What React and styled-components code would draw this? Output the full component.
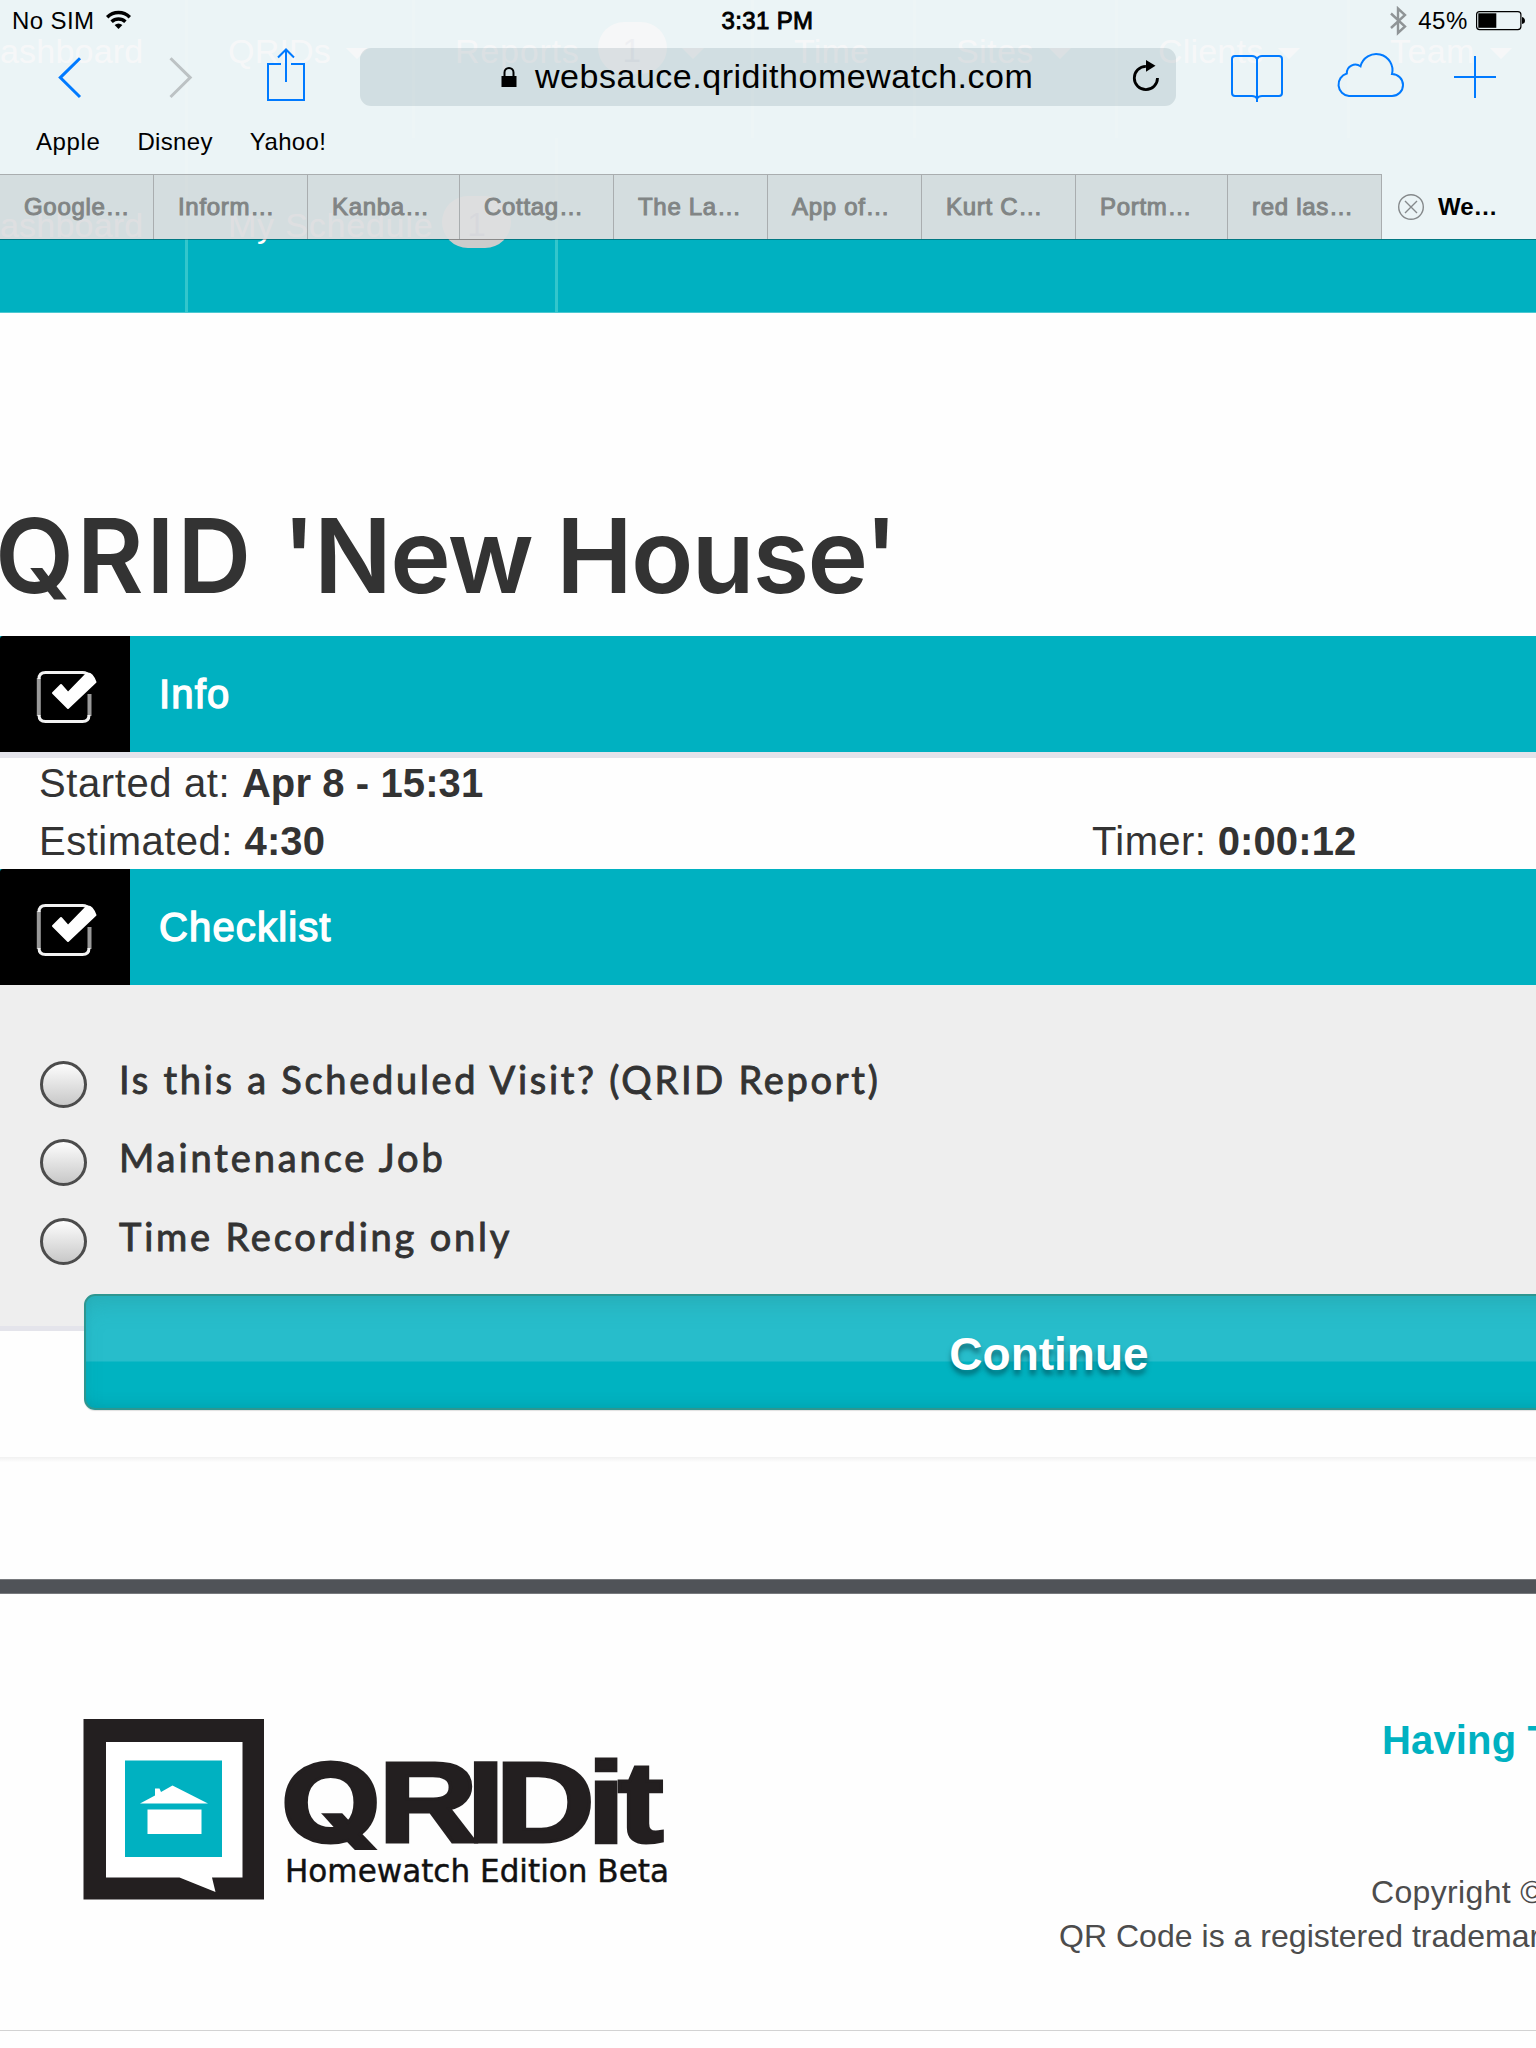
import React from "react";
import styled, { createGlobalStyle } from "styled-components";

const TEAL = "#00b1c1";
const BLUE = "#007aff";
const SANS = '"Liberation Sans", Arial, sans-serif';

const Global = createGlobalStyle`
  *, *::before, *::after { box-sizing: border-box; }
  html, body { margin: 0; padding: 0; background: #fff; }
  body { font-family: ${SANS}; color: #333; }
  svg { display: block; flex: none; }
`;

const Screen = styled.div`
  position: relative;
  width: 1536px;
  height: 2048px;
  overflow: hidden;
  background: #fefefe;
  display: flow-root;
  white-space: nowrap;
`;

/* ---------- browser chrome ---------- */

const Chrome = styled.header`
  position: absolute;
  top: 0;
  left: 0;
  width: 100%;
  color: #000;
  background: rgba(246, 247, 248, 0.957);
  background-clip: padding-box;
  border-bottom: 1px solid rgba(0, 0, 0, 0.32);
`;

const StatusBar = styled.div`
  display: grid;
  grid-template-columns: 1fr auto 1fr;
  align-items: center;
  height: 41px;
  padding: 0 10px 0 12px;
  font-size: 24px;
  line-height: 41px;
`;

const StatusGroup = styled.div`
  display: flex;
  align-items: center;
  justify-content: ${(p) => (p.$end ? "flex-end" : "flex-start")};
  letter-spacing: ${(p) => p.$track || 0}px;
`;

const Clock = styled.div`
  margin-right: 3px;
  letter-spacing: 0.35px;
  -webkit-text-stroke: 0.9px currentColor;
`;

const Toolbar = styled.div`
  display: flex;
  align-items: center;
  height: 72px;
`;

const ToolButton = styled.span`
  display: block;
  flex: none;
  width: ${(p) => p.$w}px;
  margin-left: ${(p) => p.$ml}px;
`;

const AddressField = styled.div`
  display: flex;
  align-items: center;
  width: 816px;
  height: 58px;
  margin-left: 48px;
  padding: 0 17px 0 141px;
  border-radius: 11px;
  background: rgba(0, 48, 66, 0.11);
`;

const Address = styled.span`
  flex: 1;
  margin-left: 18px;
  padding-bottom: 1px;
  font-size: 34px;
  line-height: 57px;
  letter-spacing: 0.52px;
`;

const Bookmarks = styled.div`
  display: flex;
  gap: 37px;
  height: 61px;
  padding-left: 36px;
  font-size: 24px;
  line-height: 57px;
`;

const Bookmark = styled.span`
  letter-spacing: ${(p) => p.$track}px;
`;

const TabRow = styled.div`
  display: flex;
  height: 65px;
`;

const Tab = styled.div`
  width: ${(p) => p.$w}px;
  flex: none;
  border-top: 1px solid #a9adaf;
  border-right: 1px solid #a9adaf;
  background: rgba(0, 0, 6, 0.095);
  padding-left: 24px;
  color: #818585;
  font-size: 24px;
  -webkit-text-stroke: 1px currentColor;
  line-height: 64px;
  letter-spacing: 0.7px;
`;

const ActiveTab = styled.div`
  display: flex;
  align-items: center;
  gap: 13px;
  padding: 1px 0 0 15px;
  font-size: 24px;
  font-weight: 700;
  line-height: 64px;
`;

/* ---------- site navigation ---------- */

const SiteNav = styled.nav`
  margin-top: -36px;
  background: ${TEAL};
  border-bottom: 1px solid #4cc8d1;
`;

const NavRow = styled.div`
  display: flex;
`;

const NavItem = styled.div`
  display: flex;
  align-items: flex-start;
  flex: none;
  width: ${(p) => p.$w}px;
  height: 174px;
  padding-top: 58px;
  padding-left: ${(p) => (p.$first ? 0 : 40)}px;
  border-right: 3px solid #33c6cc;
  color: #fff;
  font-size: 34px;
  line-height: 58px;
  letter-spacing: ${(p) => p.$track || 0.2}px;
`;

const Caret = styled.i`
  margin: 26px 0 0 15px;
  border: 11px solid transparent;
  border-top-color: #fff;
  border-bottom-width: 0;
`;

const Count = styled.span`
  width: 69px;
  height: 52px;
  margin-left: ${(p) => p.$ml}px;
  border-radius: 26px;
  background: ${(p) => p.$bg};
  color: #557;
  line-height: 56px;
  text-align: center;
`;

/* ---------- page ---------- */

const Title = styled.h1`
  margin: 183px 0 20px -5px;
  font-family: Inter, ${SANS};
  font-size: 102.5px;
  line-height: 120px;
  font-weight: 600;
  letter-spacing: 2.6px;
  color: #333;
`;

const TitleName = styled.span`
  letter-spacing: -1.65px;
`;

const SectionHeader = styled.div`
  display: flex;
  align-items: center;
  height: 116px;
  padding-top: 1px;
  background: ${TEAL};
  color: #fff;
  font-size: 40px;
  line-height: 115px;
  letter-spacing: 1.15px;
  -webkit-text-stroke: 1.4px currentColor;
`;

const SectionIcon = styled.div`
  width: 130px;
  height: 116px;
  margin: -1px 29px 0 0;
  background: #000;
  border-top-left-radius: 3px;
`;

const Details = styled.div`
  display: grid;
  grid-template-columns: 1053px 1fr;
  row-gap: 10px;
  height: 117px;
  padding: 1px 0 4px 39px;
  border-top: 6px solid #e3e3ea;
  font-size: 40px;
  line-height: 48px;
`;

const Detail = styled.div`
  letter-spacing: ${(p) => p.$track}px;
  ${(p) => p.$wide && "grid-column: 1 / -1;"}
  b { letter-spacing: 0.1px; }
`;

const Checklist = styled.div`
  height: 346px;
  padding-top: 60px;
  background: #eee;
  border-bottom: 5px solid #e4e4eb;
`;

const Option = styled.label`
  display: flex;
  align-items: center;
  gap: 32.5px;
  height: 78.5px;
  padding-left: 39.5px;
`;

const Radio = styled.span`
  width: 47px;
  height: 47px;
  border: 3px solid #4c4c4c;
  border-radius: 50%;
  background: linear-gradient(#fdfdfd, #c8c8c8);
`;

const OptionText = styled.span`
  padding-bottom: 11px;
  font-family: Lato, "Open Sans", sans-serif;
  font-size: 38px;
  -webkit-text-stroke: 0.9px currentColor;
  letter-spacing: ${(p) => p.$track}px;
`;

const ContinueButton = styled.div`
  width: 1931px;
  height: 116px;
  margin: 13.5px 0 0 83.5px;
  border: 2px solid #2e9690;
  border-radius: 11px;
  background: linear-gradient(#27bdcb 0 65px, #00b3c1 66px);
  box-shadow: inset 0 16px 24px -10px rgba(40, 140, 140, 0.35),
    inset 0 -10px 14px -8px rgba(0, 120, 130, 0.3), 0 1px 1px rgba(0, 0, 0, 0.12);
  color: #fff;
  font-size: 46px;
  font-weight: 700;
  line-height: 116px;
  text-align: center;
  text-shadow: 0 5px 5px rgba(0, 60, 70, 0.55);
`;

const Divider = styled.div`
  height: 5px;
  margin-top: 126px;
  background: linear-gradient(#f1f1f1, #fdfdfd);
`;

const FooterBar = styled.div`
  height: 15px;
  margin-top: 117px;
  background: #505358;
  border: solid #77797d;
  border-width: 1px 0;
`;

const Footer = styled.footer`
  display: flex;
  height: 437px;
  padding: 125px 0 0 83px;
  border-bottom: 1px solid #d2d2d2;
`;

const Legal = styled.div`
  margin-left: 386px;
  color: #4c4c4c;
  font-size: 32px;
  line-height: 44px;
`;

const HelpLink = styled.div`
  margin: -3px 0 106px 323px;
  color: ${TEAL};
  font-size: 40px;
  font-weight: 700;
  line-height: 48px;
  letter-spacing: 0.15px;
`;

const LegalLine = styled.div`
  padding-left: ${(p) => p.$indent}px;
  letter-spacing: ${(p) => p.$track}px;
`;

/* ---------- drawings ---------- */

const WifiIcon = () => (
  <svg width="28" height="22" viewBox="105 10 28 22" fill="none" stroke="#000" strokeWidth="3.4" style={{ marginLeft: 11 }}>
    <path d="M107.2 17.2a16 16 0 0 1 22.6 0" />
    <path d="M111.6 21.8a9.8 9.8 0 0 1 13.8 0" />
    <path d="M114.6 25q3.9-3.2 7.8 0l-3.9 4z" fill="#000" stroke="none" />
  </svg>
);

const BluetoothIcon = () => (
  <svg width="18" height="30" viewBox="1389 6 18 30" fill="none" stroke="#8f9496" strokeWidth="2.400" style={{ marginRight: 11 }}>
    <path d="M1391 13.5l14 13-7 6.500V8.500l7 6.500-14 13" />
  </svg>
);

const BatteryIcon = () => (
  <svg width="50" height="22" viewBox="1476 10 50 22" style={{ marginLeft: 8 }}>
    <rect x="1476.600" y="11.600" width="44.300" height="18" rx="3" fill="none" stroke="#000" strokeWidth="1.200" />
    <rect x="1478.300" y="13.300" width="18" height="14.500" fill="#000" />
    <path d="M1522 17q3 1 3 3.700t-3 3.300z" fill="#000" />
  </svg>
);

const BackIcon = () => (
  <svg width="36" height="72" viewBox="52 41 36 72" fill="none" stroke={BLUE} strokeWidth="3">
    <path d="M80 58.300L60.300 77.600 80 97" />
  </svg>
);

const ForwardIcon = () => (
  <svg width="36" height="72" viewBox="162 41 36 72" fill="none" stroke="#bcc2c4" strokeWidth="3">
    <path d="M170.500 58.300L190.200 77.600 170.500 97" />
  </svg>
);

const ShareIcon = () => (
  <svg width="52" height="72" viewBox="260 41 52 72" fill="none" stroke={BLUE} strokeWidth="2">
    <path d="M281 64h-13v36h36V64h-13M286 82V49.500M278 57.500l8-8 8 8" />
  </svg>
);

const LockIcon = () => (
  <svg width="16" height="24" viewBox="500.500 66 16 24">
    <rect x="501" y="77" width="15" height="11" fill="#000" />
    <path d="M504 78v-4.500a4.500 4.500 0 0 1 9 0V78" fill="none" stroke="#000" strokeWidth="2" />
  </svg>
);

const ReloadIcon = () => (
  <svg width="28" height="36" viewBox="1131 60 28 36">
    <path d="M1157.500 79a11.600 11.600 0 1 1-11.600-11.600" fill="none" stroke="#000" strokeWidth="2.800" />
    <path d="M1146 61l9.500 5.800-9.500 6z" fill="#000" />
  </svg>
);

const BookIcon = () => (
  <svg width="60" height="72" viewBox="1228 41 60 72" fill="none" stroke={BLUE} strokeWidth="2">
    <path d="M1257 59q-1.500-3-5-3h-17a3 3 0 0 0-3 3v34a3 3 0 0 0 3 3h17q3.500 0 5 2.500 1.500-2.500 5-2.500h17a3 3 0 0 0 3-3V59a3 3 0 0 0-3-3h-17q-3.500 0-5 3zV102" />
  </svg>
);

const CloudIcon = () => (
  <svg width="74" height="72" viewBox="1334 41 74 72" fill="none" stroke={BLUE} strokeWidth="2">
    <path d="M1349 96h43a11 11 0 0 0 0-22 16 16 0 0 0-31.500-7.700 8.600 8.600 0 0 0-13.700 7.200A11.500 11.500 0 0 0 1349 96z" />
  </svg>
);

const PlusIcon = () => (
  <svg width="50" height="72" viewBox="1450 41 50 72" fill="none" stroke={BLUE} strokeWidth="2">
    <path d="M1475 56v42M1454 77h42" />
  </svg>
);

const CloseIcon = () => (
  <svg width="28" height="28" viewBox="-14 -14 28 28" fill="none" stroke="#85898b" strokeWidth="1.400">
    <circle r="12.300" />
    <path d="M-6-6L6 6M6-6L-6 6" />
  </svg>
);

const CheckedIcon = () => (
  <svg width="130" height="116" viewBox="0 636 130 116">
    <path d="M38.800 678v38M89.500 694v22" fill="none" stroke="#999" strokeWidth="4" />
    <path d="M39 679q0-6.500 6.500-6.500h37q5 0 6.500 4M39 715q0 6.500 6.500 6.500h37q6.500 0 6.500-6.500" fill="none" stroke="#f2f2f2" strokeWidth="3" />
    <path d="M53 693l8-8 7 8 19-19.500q5-1 8.500 8.500l-27.500 26z" fill="#fff" stroke="#fff" strokeWidth="2" strokeLinejoin="round" />
  </svg>
);

const Logo = () => (
  <svg width="590" height="190" viewBox="83 1719 590 190">
    <path fill="#231f20" d="M83.500 1719H264v180.500H83.500z" />
    <path fill="#fff" d="M106 1742h136.500v135.500H212l3.500 14.500-36-14.500H106z" />
    <path fill={TEAL} d="M125 1760.500h97v96.500h-97z" />
    <path fill="#fff" d="M140 1803.500l15-8v-7h4.500l1.500 3.500 11.500-6.500 35.500 18zM147.500 1809.500h54v24.500h-54z" />
    <g transform="scale(1.2 1)" fill="#231f20" stroke="#231f20" strokeWidth="3" fontFamily={SANS} fontWeight="700" fontSize="115">
      <text y="1842" x="233.500 315.300 388.700 412.800 489.200 514.800">
        <tspan fontFamily="Inter, sans-serif" fontSize="109">Q</tspan>RIDit
      </text>
    </g>
    <text x="285" y="1882" fontFamily='"DejaVu Sans Condensed", "DejaVu Sans", sans-serif' fontSize="31.500" fill="#111" stroke="#111" strokeWidth="0.400" textLength="384" lengthAdjust="spacingAndGlyphs">
      Homewatch Edition Beta
    </text>
  </svg>
);

/* ---------- data ---------- */

const TABS = [
  ["Google…", 154], ["Inform…", 154], ["Kanba…", 152], ["Cottag…", 154], ["The La…", 154],
  ["App of…", 154], ["Kurt C…", 154], ["Portm…", 152], ["red las…", 154],
];

const OPTIONS = [
  ["Is this a Scheduled Visit? (QRID Report)", 2.72],
  ["Maintenance Job", 2.9],
  ["Time Recording only", 2.8],
];

function BrowserChrome() {
  return (
    <Chrome>
      <StatusBar>
        <StatusGroup $track={0.4}>No SIM<WifiIcon /></StatusGroup>
        <Clock>3:31 PM</Clock>
        <StatusGroup $end $track={0.6}><BluetoothIcon />45%<BatteryIcon /></StatusGroup>
      </StatusBar>
      <Toolbar>
        <ToolButton $w={36} $ml={52}><BackIcon /></ToolButton>
        <ToolButton $w={36} $ml={74}><ForwardIcon /></ToolButton>
        <ToolButton $w={52} $ml={62}><ShareIcon /></ToolButton>
        <AddressField>
          <LockIcon />
          <Address>websauce.qridithomewatch.com</Address>
          <ReloadIcon />
        </AddressField>
        <ToolButton $w={60} $ml={52}><BookIcon /></ToolButton>
        <ToolButton $w={74} $ml={46}><CloudIcon /></ToolButton>
        <ToolButton $w={50} $ml={42}><PlusIcon /></ToolButton>
      </Toolbar>
      <Bookmarks>
        <Bookmark $track={0.6}>Apple</Bookmark>
        <Bookmark $track={0.35}>Disney</Bookmark>
        <Bookmark $track={0.35}>Yahoo!</Bookmark>
      </Bookmarks>
      <TabRow>
        {TABS.map(([label, w]) => <Tab key={label} $w={w}>{label}</Tab>)}
        <ActiveTab><CloseIcon />We…</ActiveTab>
      </TabRow>
    </Chrome>
  );
}

function Navigation() {
  return (
    <SiteNav>
      <NavRow>
        <NavItem $w={188} $first>ashboard</NavItem>
        <NavItem $w={227}>QRIDs<Caret /></NavItem>
        <NavItem $w={339} $track={0.8}>Reports<Count $ml={18} $bg="#eee">1</Count><Caret /></NavItem>
        <NavItem $w={162}>Time</NavItem>
        <NavItem $w={202} $track={0.4}>Sites<Caret /></NavItem>
        <NavItem $w={232}>Clients<Caret /></NavItem>
        <NavItem $w={189} $track={0.4}>Team<Caret /></NavItem>
      </NavRow>
      <NavRow>
        <NavItem $w={188} $first>ashboard</NavItem>
        <NavItem $w={370} $track={0.8}>My Schedule<Count $ml={9} $bg="#ccc">1</Count></NavItem>
      </NavRow>
    </SiteNav>
  );
}

export default function App() {
  return (
    <Screen>
      <Global />
      <Navigation />
      <Title>QRID <TitleName>'New House'</TitleName></Title>
      <SectionHeader><SectionIcon><CheckedIcon /></SectionIcon>Info</SectionHeader>
      <Details>
        <Detail $wide $track={0.6}>Started at: <b>Apr 8 - 15:31</b></Detail>
        <Detail $track={0.5}>Estimated: <b>4:30</b></Detail>
        <Detail $track={0.4}>Timer: <b>0:00:12</b></Detail>
      </Details>
      <SectionHeader><SectionIcon><CheckedIcon /></SectionIcon>Checklist</SectionHeader>
      <Checklist>
        {OPTIONS.map(([text, track]) => (
          <Option key={text}><Radio /><OptionText $track={track}>{text}</OptionText></Option>
        ))}
        <ContinueButton>Continue</ContinueButton>
      </Checklist>
      <Divider />
      <FooterBar />
      <Footer>
        <Logo />
        <Legal>
          <HelpLink>Having T</HelpLink>
          <LegalLine $indent={312} $track={0.35}>Copyright ©</LegalLine>
          <LegalLine $indent={0} $track={0.03}>QR Code is a registered trademar</LegalLine>
        </Legal>
      </Footer>
      <BrowserChrome />
    </Screen>
  );
}
